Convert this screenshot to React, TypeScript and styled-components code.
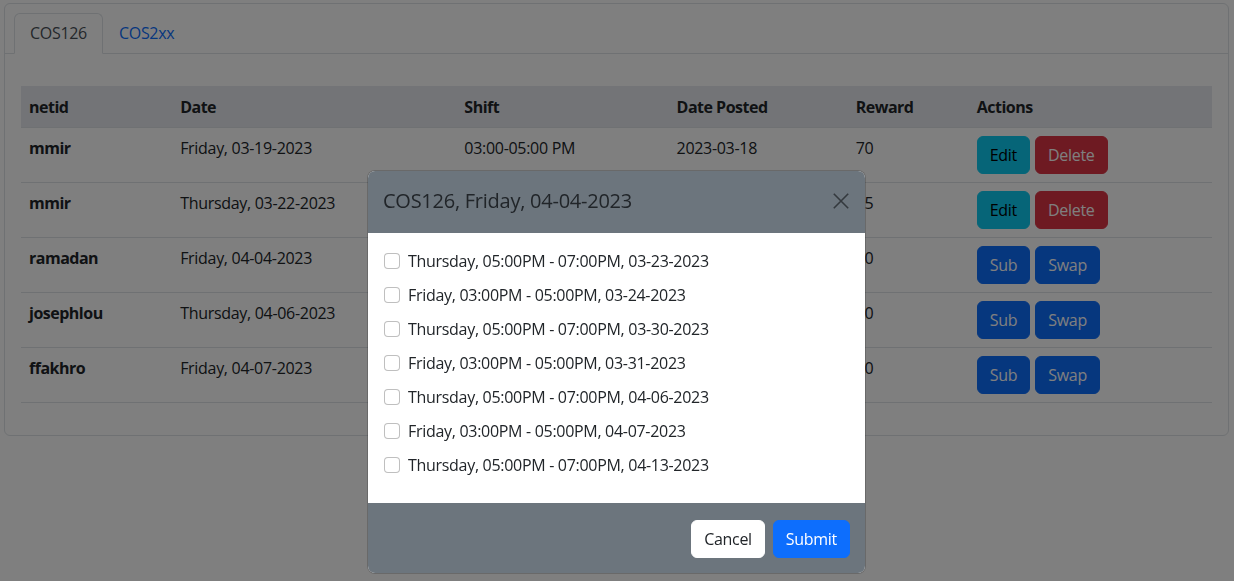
import React from 'react';
import styled, { createGlobalStyle } from 'styled-components';

const GlobalStyle = createGlobalStyle`
  * { box-sizing: border-box; }
  html, body { margin: 0; padding: 0; }
  body {
    font-family: "Open Sans", "Noto Sans", sans-serif;
    font-size: 16px;
    line-height: 1.5;
    letter-spacing: -0.3px;
    color: #212529;
    background: #fff;
    height: 581px;
    overflow: hidden;
  }
`;

const Page = styled.div`
  padding: 3px 5px 0 4px;
`;

const Card = styled.div`
  border: 1px solid #dee2e6;
  border-radius: 6px;
`;

const TabBar = styled.div`
  display: flex;
  padding: 9px 9px 0;
  border-bottom: 1px solid #dee2e6;
`;

const Tab = styled.div<{ $active?: boolean }>`
  padding: 7px 15px 8px;
  margin-bottom: -1px;
  border: 1px solid ${p => (p.$active ? '#dee2e6' : 'transparent')};
  border-bottom-color: ${p => (p.$active ? '#fff' : 'transparent')};
  border-radius: 6px 6px 0 0;
  background: ${p => (p.$active ? '#fff' : 'transparent')};
  color: ${p => (p.$active ? '#495057' : '#0d6efd')};
`;

const TabContent = styled.div`
  padding: 32px 16px 16px;
`;

const Table = styled.table`
  width: 100%;
  table-layout: fixed;
  border-collapse: collapse;
  margin-bottom: 16px;
  vertical-align: top;
`;

const HeadCell = styled.th<{ $w: number }>`
  width: ${p => p.$w}px;
  text-align: left;
  font-weight: 700;
  letter-spacing: -0.5px;
  padding: 9px 8px 8px;
  background: #e6e9ee;
  border-bottom: 1px solid #dee2e6;
`;

const Cell = styled.td<{ $bold?: boolean }>`
  padding: 8px;
  font-weight: ${p => (p.$bold ? 700 : 400)};
  letter-spacing: ${p => (p.$bold ? '-0.5px' : '-0.3px')};
  border-bottom: 1px solid #dee2e6;
  vertical-align: top;
`;

const Actions = styled.div`
  display: flex;
  gap: 5px;
`;

const tones = {
  info: { bg: '#0dcaf0', fg: '#000' },
  danger: { bg: '#dc3545', fg: '#fff' },
  primary: { bg: '#0d6efd', fg: '#fff' },
  light: { bg: '#fff', fg: '#212529' },
};

const Button = styled.button<{ $tone: keyof typeof tones }>`
  font-family: inherit;
  font-size: 16px;
  line-height: 24px;
  letter-spacing: -0.3px;
  padding: 6px 12px;
  border: 1px solid ${p => tones[p.$tone].bg};
  border-radius: 6px;
  background: ${p => tones[p.$tone].bg};
  color: ${p => tones[p.$tone].fg};
`;

const Backdrop = styled.div`
  position: fixed;
  inset: 0;
  background: rgba(0, 0, 0, 0.5);
`;

const Modal = styled.div`
  position: fixed;
  top: 170px;
  left: 367px;
  width: 499px;
  background: #fff;
  background-clip: padding-box;
  border: 1px solid rgba(0, 0, 0, 0.175);
  border-radius: 8px;
  overflow: hidden;
`;

const ModalHeader = styled.div`
  display: flex;
  align-items: center;
  justify-content: space-between;
  padding: 15px 12px 16px 15px;
  background: #6c757d;
`;

const ModalTitle = styled.h5`
  margin: 0;
  font-size: 20px;
  font-weight: 500;
  line-height: 30px;
  letter-spacing: -0.25px;
  color: #212529;
`;

const Close = styled.button`
  display: flex;
  align-items: center;
  justify-content: center;
  width: 24px;
  height: 24px;
  padding: 0;
  border: 0;
  background: transparent;
  color: #34393e;
`;

const ModalBody = styled.div`
  padding: 16px;
  border-top: 1px solid #6c757d;
`;

const Check = styled.label`
  display: flex;
  align-items: center;
  gap: 8px;
  height: 24px;
  margin-bottom: 10px;
  color: #212529;
`;

const Box = styled.span`
  width: 16px;
  height: 16px;
  border: 1px solid rgba(0, 0, 0, 0.25);
  border-radius: 4px;
  background: #fff;
  flex: none;
`;

const ModalFooter = styled.div`
  display: flex;
  justify-content: flex-end;
  gap: 8px;
  padding: 16px 15px 15px;
  background: #6c757d;
  border-top: 1px solid #6c757d;
`;

const columns: [string, number][] = [
  ['netid', 151],
  ['Date', 284],
  ['Shift', 212],
  ['Date Posted', 179],
  ['Reward', 121],
  ['Actions', 243],
];

const rows = [
  { netid: 'mmir', date: 'Friday, 03-19-2023', shift: '03:00-05:00 PM', posted: '2023-03-18', reward: '70', mine: true },
  { netid: 'mmir', date: 'Thursday, 03-22-2023', shift: '', posted: '', reward: '65', mine: true },
  { netid: 'ramadan', date: 'Friday, 04-04-2023', shift: '', posted: '', reward: '50', mine: false },
  { netid: 'josephlou', date: 'Thursday, 04-06-2023', shift: '', posted: '', reward: '50', mine: false },
  { netid: 'ffakhro', date: 'Friday, 04-07-2023', shift: '', posted: '', reward: '50', mine: false },
];

const options = [
  'Thursday, 05:00PM - 07:00PM, 03-23-2023',
  'Friday, 03:00PM - 05:00PM, 03-24-2023',
  'Thursday, 05:00PM - 07:00PM, 03-30-2023',
  'Friday, 03:00PM - 05:00PM, 03-31-2023',
  'Thursday, 05:00PM - 07:00PM, 04-06-2023',
  'Friday, 03:00PM - 05:00PM, 04-07-2023',
  'Thursday, 05:00PM - 07:00PM, 04-13-2023',
];

export default function App() {
  return (
    <>
      <GlobalStyle />
      <Page>
        <Card>
          <TabBar>
            <Tab $active>COS126</Tab>
            <Tab>COS2xx</Tab>
          </TabBar>
          <TabContent>
            <Table>
              <thead>
                <tr>
                  {columns.map(([label, w]) => (
                    <HeadCell key={label} $w={w}>{label}</HeadCell>
                  ))}
                </tr>
              </thead>
              <tbody>
                {rows.map((r, i) => (
                  <tr key={i}>
                    <Cell $bold>{r.netid}</Cell>
                    <Cell>{r.date}</Cell>
                    <Cell>{r.shift}</Cell>
                    <Cell>{r.posted}</Cell>
                    <Cell>{r.reward}</Cell>
                    <Cell>
                      {r.mine ? (
                        <Actions>
                          <Button $tone="info">Edit</Button>
                          <Button $tone="danger">Delete</Button>
                        </Actions>
                      ) : (
                        <Actions>
                          <Button $tone="primary">Sub</Button>
                          <Button $tone="primary">Swap</Button>
                        </Actions>
                      )}
                    </Cell>
                  </tr>
                ))}
              </tbody>
            </Table>
          </TabContent>
        </Card>
      </Page>

      <Backdrop />
      <Modal>
        <ModalHeader>
          <ModalTitle>COS126, Friday, 04-04-2023</ModalTitle>
          <Close aria-label="Close">
            <svg width="16" height="16" viewBox="0 0 16 16" fill="none" stroke="currentColor" strokeWidth="1.6">
              <path d="M0.8 0.8l14.4 14.4M15.2 0.8L0.8 15.2" />
            </svg>
          </Close>
        </ModalHeader>
        <ModalBody>
          {options.map(o => (
            <Check key={o}>
              <Box />
              {o}
            </Check>
          ))}
        </ModalBody>
        <ModalFooter>
          <Button $tone="light">Cancel</Button>
          <Button $tone="primary">Submit</Button>
        </ModalFooter>
      </Modal>
    </>
  );
}
